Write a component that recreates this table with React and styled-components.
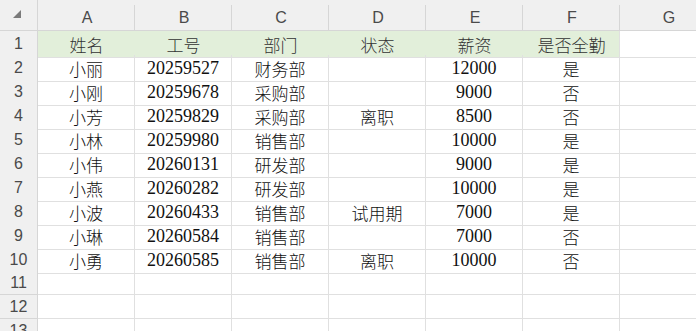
import React from 'react';
import styled, { createGlobalStyle } from 'styled-components';

const gridLine = '#e0e0e0';
const headLine = '#d6d6d6';
const headBg = '#f0f0f0';
const titleBg = '#e2efda';

const GlobalStyle = createGlobalStyle`
  html, body {
    margin: 0;
    padding: 0;
    background: #fff;
  }
  #root {
    width: 696px;
    height: 331px;
    overflow: hidden;
  }
`;

const Sheet = styled.div`
  display: flex;
  flex-direction: column;
  width: 716px;
`;

const ColumnBar = styled.div`
  display: grid;
  grid-template-columns: 38px repeat(7, 97px);
  height: 31px;
  padding-top: 5px;
  box-sizing: border-box;
  background: ${headBg};
  border-bottom: 1px solid ${headLine};
`;

const Corner = styled.div`
  display: flex;
  align-items: flex-start;
  justify-content: flex-start;
  padding: 10px 0 0 13px;
  margin-top: -5px;
  border-right: 1px solid ${headLine};
`;

const ColumnLabel = styled.div`
  display: flex;
  align-items: center;
  justify-content: center;
  border-right: 1px solid ${headLine};
  font-family: 'Liberation Sans', 'Noto Sans', sans-serif;
  font-size: 16px;
  color: #4a4a4a;
  padding-left: 2px;
`;

const Row = styled.div`
  display: grid;
  grid-template-columns: 38px ${(p) => (p.$title ? '582px' : 'repeat(6, 97px)')} 97px;
  height: 24px;
`;

const TitleBand = styled.div`
  display: grid;
  grid-template-columns: repeat(6, 97px);
  background: ${titleBg};
  border-bottom: 1px solid ${gridLine};
  border-right: 1px solid ${gridLine};
  box-sizing: border-box;
`;

const RowLabel = styled.div`
  display: flex;
  align-items: center;
  justify-content: center;
  background: ${headBg};
  border-right: 1px solid ${headLine};
  border-bottom: 1px solid ${headLine};
  box-sizing: border-box;
  font-family: 'Liberation Sans', 'Noto Sans', sans-serif;
  font-size: 16px;
  color: #4a4a4a;
`;

const Cell = styled.div`
  display: flex;
  align-items: center;
  justify-content: center;
  box-sizing: border-box;
  border-right: ${(p) => (p.$plain ? 'none' : `1px solid ${gridLine}`)};
  border-bottom: ${(p) => (p.$plain ? 'none' : `1px solid ${gridLine}`)};
  font-family: 'Liberation Serif', 'Noto Sans CJK SC', serif;
  font-size: ${(p) => (p.$num ? '18px' : '17px')};
  font-weight: 300;
  color: ${(p) => (p.$head ? '#333' : '#111')};
  white-space: nowrap;
  padding-top: 1px;
`;

const columns = ['A', 'B', 'C', 'D', 'E', 'F', 'G'];
const titles = ['姓名', '工号', '部门', '状态', '薪资', '是否全勤'];

const people = [
  ['小丽', '20259527', '财务部', '', '12000', '是'],
  ['小刚', '20259678', '采购部', '', '9000', '否'],
  ['小芳', '20259829', '采购部', '离职', '8500', '否'],
  ['小林', '20259980', '销售部', '', '10000', '是'],
  ['小伟', '20260131', '研发部', '', '9000', '是'],
  ['小燕', '20260282', '研发部', '', '10000', '是'],
  ['小波', '20260433', '销售部', '试用期', '7000', '是'],
  ['小琳', '20260584', '销售部', '', '7000', '否'],
  ['小勇', '20260585', '销售部', '离职', '10000', '否'],
];

const isNum = (v) => /^\d+$/.test(v);

const SelectAll = () => (
  <svg width="8" height="8" viewBox="0 0 8 8">
    <polygon points="8,0 8,8 0,8" fill="#7a7a7a" />
  </svg>
);

const App = () => {
  return (
    <>
      <GlobalStyle />
      <Sheet>
        <ColumnBar>
          <Corner>
            <SelectAll />
          </Corner>
          {columns.map((c) => (
            <ColumnLabel key={c}>{c}</ColumnLabel>
          ))}
        </ColumnBar>

        <Row $title>
          <RowLabel>1</RowLabel>
          <TitleBand>
            {titles.map((t) => (
              <Cell key={t} $plain $head>
                {t}
              </Cell>
            ))}
          </TitleBand>
          <Cell />
        </Row>

        {people.map((person, i) => (
          <Row key={person[1]}>
            <RowLabel>{i + 2}</RowLabel>
            {person.map((v, j) => (
              <Cell key={j} $num={isNum(v)}>
                {v}
              </Cell>
            ))}
            <Cell />
          </Row>
        ))}

        {[11, 12, 13].map((n) => (
          <Row key={n}>
            <RowLabel>{n}</RowLabel>
            {columns.map((c) => (
              <Cell key={c} />
            ))}
          </Row>
        ))}
      </Sheet>
    </>
  );
};

export default App;
